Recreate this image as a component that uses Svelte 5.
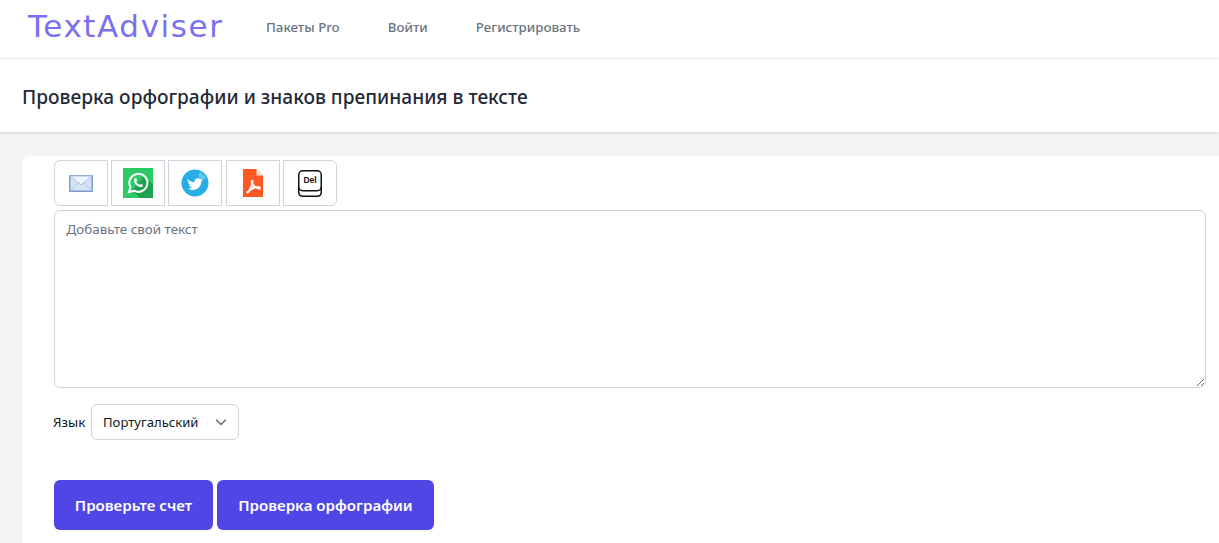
<script>
    let text = "";
    let lang = "pt";
    const navLinks = ["Пакеты Pro", "Войти", "Регистрировать"];
</script>

<nav class="nav">
    <a class="logo" href="#top">TextAdviser</a>
    <div class="links">
        {#each navLinks as link}
            <a href="#top">{link}</a>
        {/each}
    </div>
</nav>

<header class="title">
    <h1>Проверка орфографии и знаков препинания в тексте</h1>
</header>

<main class="main">
    <section class="card">
        <div class="tools">
            <button class="tool" aria-label="mail">
                <svg width="24" height="17" viewBox="0 0 24 17">
                    <rect x="0.75" y="0.75" width="22.5" height="15.5" fill="#d5e3f8" stroke="#7f9bcf" stroke-width="1.5" />
                    <path d="M1 1 L12 10 L23 1 Z" fill="#eef4fd" stroke="#a9c0e6" stroke-width="1" />
                    <path d="M1 16 L9 7.5 M23 16 L15 7.5" stroke="#b4c8ea" stroke-width="1" fill="none" />
                </svg>
            </button>
            <button class="tool" aria-label="whatsapp">
                <svg width="30" height="30" viewBox="0 0 30 30">
                    <rect width="30" height="30" fill="#2acb65" />
                    <path d="M9 23 L13 26 L17 30 L30 30 L30 17 L21 8 Z" fill="#1fa152" />
                    <path d="M6 24 L7.4 19 A9 9 0 1 1 11 22.7 Z" fill="none" stroke="#fff" stroke-width="2" />
                    <path d="M11.6 10.6 C12.4 9.8 13.1 9.9 13.4 10.6 L14 12 C14.2 12.5 13.3 13.2 13.2 13.7 C13.8 15.1 14.9 16.2 16.4 16.8 C16.9 16.6 17.5 15.8 18 16 L19.4 16.7 C20.1 17 20.1 17.8 19.5 18.4 C18.3 19.6 16.1 19.3 13.8 17.5 C11.3 15.4 10.3 12.2 11.6 10.6 Z" fill="#fff" />
                </svg>
            </button>
            <button class="tool" aria-label="twitter">
                <svg width="28" height="28" viewBox="0 0 28 28">
                    <circle cx="14" cy="14" r="13.5" fill="#27aee4" />
                    <path d="M19 3 A12 12 0 0 1 25 9 A3.5 3.5 0 0 1 19 3 Z" fill="#6cc6ec" />
                    <path d="M6.5 10 C8.3 12 10.5 13.1 13.6 13.3 C13.2 10.9 15 9.3 16.8 9.3 C17.9 9.3 18.7 9.8 19.2 10.3 C20 10.2 20.7 9.9 21.4 9.5 C21.1 10.3 20.6 10.9 20 11.3 C20.7 11.2 21.3 11.1 21.9 10.8 C21.4 11.5 20.9 12 20.2 12.5 C20.4 16.9 17 21 11.8 21 C9.9 21 8 20.4 6.6 19.5 C8.2 19.6 9.8 19.2 11 18.2 C9.5 18.1 8.4 17.2 8 15.9 C8.5 16 9 16 9.5 15.8 C7.9 15.4 6.9 14 6.9 12.5 C7.4 12.7 7.9 12.9 8.4 12.9 C6.8 12 6 11.5 6.5 10 Z" fill="#fff" />
                </svg>
            </button>
            <button class="tool tool-wide" aria-label="pdf">
                <svg width="20" height="28" viewBox="0 0 20 28">
                    <path d="M0 0 H13.5 L20 6.5 V28 H0 Z" fill="#ff5722" />
                    <path d="M13.5 0 L20 6.5 H13.5 Z" fill="#fbe0d8" />
                    <path d="M4 24 C6 22.5 8.5 18 9.5 13.5 C9.8 11.5 9 11 8.7 12.5 C8.5 15 11.5 19 16 19.5 C17.5 19.5 17 18 15 18 C11.5 18 7.5 20 4.5 23 Z" fill="none" stroke="#fff" stroke-width="2" />
                </svg>
            </button>
            <button class="tool" aria-label="del">
                <svg width="24" height="27" viewBox="0 0 24 27">
                    <rect x="0.75" y="0.75" width="22.5" height="20" rx="4" fill="#fff" stroke="#111" stroke-width="1.5" />
                    <path d="M0.75 17 V22 C0.75 24.5 2.5 26.25 5 26.25 H19 C21.5 26.25 23.25 24.5 23.25 22 V17" fill="none" stroke="#111" stroke-width="1.5" />
                    <text x="12" y="13" text-anchor="middle" class="del-text">Del</text>
                </svg>
            </button>
        </div>

        <textarea class="input" placeholder="Добавьте свой текст" bind:value={text}></textarea>

        <div class="lang">
            <label for="lang">Язык</label>
            <div class="select-wrap">
                <select id="lang" bind:value={lang}>
                    <option value="pt">Португальский</option>
                    <option value="en">Английский</option>
                    <option value="ru">Русский</option>
                </select>
                <svg class="chevron" width="20" height="20" viewBox="0 0 20 20" fill="none">
                    <path d="M5.5 8l4.5 4.5 4.5-4.5" stroke="#6b7280" stroke-width="1.6" stroke-linecap="round" stroke-linejoin="round" />
                </svg>
            </div>
        </div>

        <div class="actions">
            <button class="btn btn-count">Проверьте счет</button>
            <button class="btn btn-spell">Проверка орфографии</button>
        </div>
    </section>
</main>

<style>
    :global(body) {
        background: #f3f4f6;
        font-family: "Noto Sans", "Open Sans", sans-serif;
        overflow: hidden;
    }

    .nav {
        display: flex;
        align-items: center;
        height: 58px;
        padding-left: 28px;
        background: #fff;
        border-bottom: 1px solid #f0f1f3;
    }

    .logo {
        width: 238px;
        margin-bottom: 6px;
        font-family: "DejaVu Sans", sans-serif;
        font-size: 31px;
        letter-spacing: 1.6px;
        color: #7b6ff2;
        text-decoration: none;
    }

    .links {
        display: flex;
        gap: 48px;
        margin-bottom: 4px;
    }

    .links a {
        font-size: 13.3px;
        font-weight: 500;
        color: #6b7280;
        text-decoration: none;
    }

    .title {
        height: 73px;
        display: flex;
        align-items: center;
        padding-left: 22px;
        background: #fff;
        box-shadow: 0 1px 3px rgba(0, 0, 0, 0.15);
    }

    .title h1 {
        margin: 2px 0 0;
        font-size: 19.15px;
        font-weight: 500;
        color: #1f2937;
    }

    .main {
        padding: 24px 0 0 22px;
    }

    .card {
        background: #fff;
        border-radius: 8px 0 0 0;
        padding: 4px 13px 14px 32px;
        height: 400px;
        box-sizing: border-box;
    }

    .tools {
        display: flex;
        gap: 3px;
    }

    .tool {
        width: 54px;
        height: 46px;
        padding: 0;
        background: #fff;
        border: 1px solid #d1d5db;
        display: flex;
        align-items: center;
        justify-content: center;
    }

    .tool-wide {
        margin-left: 1px;
    }

    .tool:first-child {
        border-radius: 6px 0 0 6px;
    }

    .tool:last-child {
        border-radius: 0 6px 6px 0;
    }

    .del-text {
        font-family: "Liberation Sans", sans-serif;
        font-size: 8.5px;
        font-weight: 700;
        fill: #111;
    }

    .input {
        display: block;
        width: 100%;
        height: 178px;
        margin-top: 4px;
        padding: 9px 11.5px;
        box-sizing: border-box;
        border: 1px solid #d1d5db;
        border-radius: 6px;
        font-family: inherit;
        font-size: 13.4px;
        line-height: 18px;
        background: #fff;
    }

    .input::placeholder {
        color: #6b7280;
        opacity: 1;
    }

    .lang {
        display: flex;
        align-items: center;
        gap: 4px;
        margin-top: 16px;
    }

    .lang label {
        width: 34px;
        margin-left: -1px;
        font-size: 13.4px;
        color: #111827;
    }

    .select-wrap {
        position: relative;
        width: 148px;
        height: 36px;
    }

    select {
        appearance: none;
        width: 100%;
        height: 100%;
        padding: 0 11px;
        border: 1px solid #d1d5db;
        border-radius: 6px;
        background: #fff;
        font-family: inherit;
        font-size: 13.1px;
        color: #111827;
    }

    .chevron {
        position: absolute;
        right: 8px;
        top: 8px;
        pointer-events: none;
    }

    .actions {
        display: flex;
        gap: 4px;
        margin-top: 40px;
    }

    .btn {
        height: 50px;
        padding: 0;
        border: none;
        border-radius: 6px;
        background: #4f46e5;
        box-shadow: 0 1px 2px rgba(0, 0, 0, 0.05);
        font-family: inherit;
        font-size: 15.1px;
        font-weight: 600;
        color: #fff;
    }

    .btn-count {
        width: 159px;
    }

    .btn-spell {
        width: 217px;
    }
</style>
